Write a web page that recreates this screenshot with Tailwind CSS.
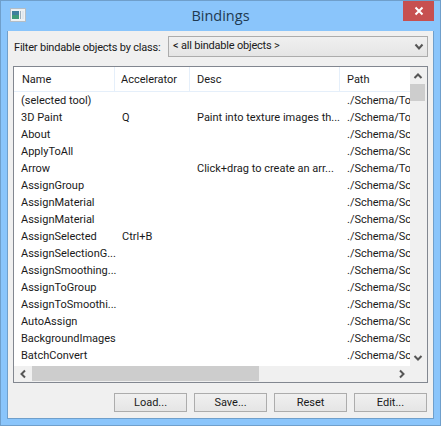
<!DOCTYPE html>
<html lang="en">
<head>
<meta charset="UTF-8">
<title>Bindings</title>
<script src="https://cdn.jsdelivr.net/npm/@tailwindcss/browser@4"></script>
</head>
<body class="m-0 overflow-hidden">
<div class="w-[441px] h-[426px] bg-[#8ac5fb] border border-[#6f9fcb] flex flex-col font-['Roboto',sans-serif] text-[11px] text-[#1a1a1a]">
  <!-- title bar -->
  <div class="h-[30px] shrink-0 relative flex items-center justify-center">
    <svg class="absolute left-[9px] top-[7px]" width="16" height="14" viewBox="0 0 16 14">
      <rect x="0.5" y="0.5" width="15" height="13" fill="#eef1f3" stroke="#b3bdc6"/>
      <rect x="2" y="3" width="7" height="4" fill="#3f7f9c"/>
      <rect x="2" y="7" width="7" height="4" fill="#3f9a78"/>
      <rect x="10" y="3" width="1" height="8" fill="#9fb0bd"/>
      <rect x="12" y="3" width="2" height="8" fill="#dfe7ee"/>
    </svg>
    <span class="text-[14.5px] text-[#1f3a52] font-['Open_Sans',sans-serif] pb-[1px]">Bindings</span>
    <div class="absolute right-[6px] top-0 w-[31px] h-[20px] bg-[#c75050] flex items-center justify-center">
      <svg width="10" height="10" viewBox="0 0 10 10"><path d="M1.500 1.500l7 7M8.500 1.500l-7 7" stroke="#fff" stroke-width="2"/></svg>
    </div>
  </div>
  <!-- client area -->
  <div class="mx-[6px] h-[388px] bg-[#f0f0f0] border-x border-b border-[#6f9fcb] flex flex-col px-[5px] pt-[5px]">
    <div class="flex items-center h-[21px]">
      <span class="w-[155px] shrink-0 pl-[1px] pt-[3px] whitespace-nowrap tracking-[-0.2px]">Filter bindable objects by class:</span>
      <div class="flex-1 h-[21px] border border-[#acacac] bg-gradient-to-b from-[#f0f0f0] to-[#e5e5e5] flex items-center justify-between pl-[4px] pr-[3px]">
        <span class="tracking-[-0.2px]">&lt; all bindable objects &gt;</span>
        <svg width="10" height="8" viewBox="0 0 10 8"><path d="M1.500 1.500L5 5.500l3.500-4" fill="none" stroke="#555" stroke-width="2"/></svg>
      </div>
    </div>
    <div class="mt-[9px] h-[317px] border border-[#828790] bg-white flex flex-col">
      <div class="flex-1 flex min-h-0">
        <div class="flex-1 min-w-0 overflow-hidden">
          <div class="h-[25px] flex items-center border-b border-[#e5effa]">
            <div class="w-[101px] shrink-0 h-full flex items-center pl-[8px] pt-[2px] border-r border-[#e5effa]">Name</div>
            <div class="w-[75px] shrink-0 h-full flex items-center pl-[6px] pt-[2px] border-r border-[#e5effa]">Accelerator</div>
            <div class="w-[150px] shrink-0 h-full flex items-center pl-[7px] pt-[2px] border-r border-[#e5effa]">Desc</div>
            <div class="flex-1 h-full flex items-center pl-[7px] pt-[2px]">Path</div>
          </div>
          <div id="rows"></div>
        </div>
        <div class="w-[17px] shrink-0 bg-[#f0f0f0] flex flex-col items-start">
          <div class="w-[15px] h-[17px] flex items-center justify-center"><svg width="10" height="8" viewBox="0 0 10 8"><path d="M1.500 6L5 2.500 8.500 6" fill="none" stroke="#555" stroke-width="2"/></svg></div>
          <div class="w-[15px] h-[17px] bg-[#cdcdcd]"></div>
          <div class="flex-1"></div>
          <div class="w-[15px] h-[17px] flex items-center justify-center"><svg width="10" height="8" viewBox="0 0 10 8"><path d="M1.500 2L5 5.500 8.500 2" fill="none" stroke="#555" stroke-width="2"/></svg></div>
        </div>
      </div>
      <div class="h-[16px] shrink-0 bg-[#f0f0f0] flex items-start">
        <div class="w-[18px] h-[15px] flex items-center justify-center"><svg width="8" height="10" viewBox="0 0 8 10"><path d="M6 1.500L2.500 5 6 8.500" fill="none" stroke="#555" stroke-width="2"/></svg></div>
        <div class="w-[227px] h-[15px] bg-[#cdcdcd]"></div>
        <div class="flex-1"></div>
        <div class="w-[17px] h-[15px] flex items-center justify-center"><svg width="8" height="10" viewBox="0 0 8 10"><path d="M2 1.500L5.500 5 2 8.500" fill="none" stroke="#555" stroke-width="2"/></svg></div>
        <div class="w-[17px]"></div>
      </div>
    </div>
    <div class="flex justify-end gap-[7px] mt-[10px] pr-[1px]">
      <button class="w-[73px] h-[19px] pt-[1px] border border-[#acacac] bg-gradient-to-b from-[#f0f0f0] to-[#e5e5e5]">Load...</button>
      <button class="w-[73px] h-[19px] pt-[1px] border border-[#acacac] bg-gradient-to-b from-[#f0f0f0] to-[#e5e5e5]">Save...</button>
      <button class="w-[73px] h-[19px] pt-[1px] border border-[#acacac] bg-gradient-to-b from-[#f0f0f0] to-[#e5e5e5]">Reset</button>
      <button class="w-[73px] h-[19px] pt-[1px] border border-[#acacac] bg-gradient-to-b from-[#f0f0f0] to-[#e5e5e5]">Edit...</button>
    </div>
  </div>
</div>
<script>
  const rows = [
    ['(selected tool)', '', '', './Schema/To'],
    ['3D Paint', 'Q', 'Paint into texture images th...', './Schema/To'],
    ['About', '', '', './Schema/Sc'],
    ['ApplyToAll', '', '', './Schema/Sc'],
    ['Arrow', '', 'Click+drag to create an arr...', './Schema/To'],
    ['AssignGroup', '', '', './Schema/Sc'],
    ['AssignMaterial', '', '', './Schema/Sc'],
    ['AssignMaterial', '', '', './Schema/Sc'],
    ['AssignSelected', 'Ctrl+B', '', './Schema/Sc'],
    ['AssignSelectionG...', '', '', './Schema/Sc'],
    ['AssignSmoothing...', '', '', './Schema/Sc'],
    ['AssignToGroup', '', '', './Schema/Sc'],
    ['AssignToSmoothi...', '', '', './Schema/Sc'],
    ['AutoAssign', '', '', './Schema/Sc'],
    ['BackgroundImages', '', '', './Schema/Sc'],
    ['BatchConvert', '', '', './Schema/Sc'],
  ];
  document.getElementById('rows').innerHTML = rows.map(r => `
    <div class="h-[17px] pt-[1px] flex items-center whitespace-nowrap">
      <div class="w-[101px] shrink-0 pl-[7px]">${r[0]}</div>
      <div class="w-[75px] shrink-0 pl-[7px]">${r[1]}</div>
      <div class="w-[150px] shrink-0 pl-[7px]">${r[2]}</div>
      <div class="pl-[7px]">${r[3]}</div>
    </div>`).join('');
</script>
</body>
</html>
